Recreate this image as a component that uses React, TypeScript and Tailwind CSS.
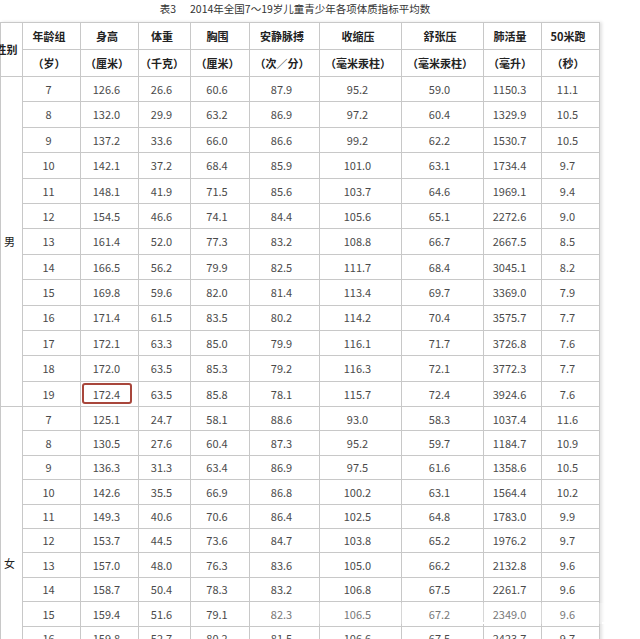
import React from "react";

const male: string[][] = [
  ["7", "126.6", "26.6", "60.6", "87.9", "95.2", "59.0", "1150.3", "11.1"],
  ["8", "132.0", "29.9", "63.2", "86.9", "97.2", "60.4", "1329.9", "10.5"],
  ["9", "137.2", "33.6", "66.0", "86.6", "99.2", "62.2", "1530.7", "10.5"],
  ["10", "142.1", "37.2", "68.4", "85.9", "101.0", "63.1", "1734.4", "9.7"],
  ["11", "148.1", "41.9", "71.5", "85.6", "103.7", "64.6", "1969.1", "9.4"],
  ["12", "154.5", "46.6", "74.1", "84.4", "105.6", "65.1", "2272.6", "9.0"],
  ["13", "161.4", "52.0", "77.3", "83.2", "108.8", "66.7", "2667.5", "8.5"],
  ["14", "166.5", "56.2", "79.9", "82.5", "111.7", "68.4", "3045.1", "8.2"],
  ["15", "169.8", "59.6", "82.0", "81.4", "113.4", "69.7", "3369.0", "7.9"],
  ["16", "171.4", "61.5", "83.5", "80.2", "114.2", "70.4", "3575.7", "7.7"],
  ["17", "172.1", "63.3", "85.0", "79.9", "116.1", "71.7", "3726.8", "7.6"],
  ["18", "172.0", "63.5", "85.3", "79.2", "116.3", "72.1", "3772.3", "7.7"],
  ["19", "172.4", "63.5", "85.8", "78.1", "115.7", "72.4", "3924.6", "7.6"],
];

const female: string[][] = [
  ["7", "125.1", "24.7", "58.1", "88.6", "93.0", "58.3", "1037.4", "11.6"],
  ["8", "130.5", "27.6", "60.4", "87.3", "95.2", "59.7", "1184.7", "10.9"],
  ["9", "136.3", "31.3", "63.4", "86.9", "97.5", "61.6", "1358.6", "10.5"],
  ["10", "142.6", "35.5", "66.9", "86.8", "100.2", "63.1", "1564.4", "10.2"],
  ["11", "149.3", "40.6", "70.6", "86.4", "102.5", "64.8", "1783.0", "9.9"],
  ["12", "153.7", "44.5", "73.6", "84.7", "103.8", "65.2", "1976.2", "9.7"],
  ["13", "157.0", "48.0", "76.3", "83.6", "105.0", "66.2", "2132.8", "9.6"],
  ["14", "158.7", "50.4", "78.3", "83.2", "106.8", "67.5", "2261.7", "9.6"],
  ["15", "159.4", "51.6", "79.1", "82.3", "106.5", "67.2", "2349.0", "9.6"],
  ["16", "159.8", "52.7", "80.2", "81.5", "106.6", "67.5", "2423.7", "9.7"],
  ["17", "160.1", "53.3", "80.9", "81.2", "107.0", "67.8", "2440.2", "9.8"],
  ["18", "160.1", "52.6", "80.8", "80.5", "106.2", "67.8", "2458.5", "9.8"],
  ["19", "159.9", "52.7", "81.1", "79.9", "106.1", "68.1", "2499.2", "9.8"],
];

const heads = ["年龄组", "身高", "体重", "胸围", "安静脉搏", "收缩压", "舒张压", "肺活量", "50米跑"];
const units = ["（岁）", "（厘米）", "（千克）", "（厘米）", "（次／分）", "（毫米汞柱）", "（毫米汞柱）", "（毫升）", "（秒）"];

const headCell = "flex items-center justify-center bg-white pr-[5px] text-[11px] font-bold text-[#222] whitespace-nowrap";
const dataCell = "relative flex items-center justify-center bg-white pr-[6px] text-[11px] text-[#4a4a4a] whitespace-nowrap";

export default function App() {
  return (
    <div className="relative h-[639px] w-[640px] overflow-hidden bg-white font-['Noto_Sans_CJK_SC','Noto_Sans',sans-serif]">
      <div className="flex h-[22px] w-[600px] items-center justify-center gap-[14px] pb-[4px] pr-[10px] text-[10.5px] text-[#333]">
        <span>表3</span>
        <span>2014年全国7～19岁儿童青少年各项体质指标平均数</span>
      </div>
      <div className="grid w-fit grid-cols-[21px_57px_57px_51px_58px_69px_81px_81px_57px_57px] grid-rows-[26px_26px_repeat(13,24.4px)_repeat(13,23.4px)] gap-px bg-[#c8c8c8] p-px shadow-[2px_0_3px_rgba(0,0,0,0.12)]">
        <div className="row-span-2 flex items-center justify-center bg-white pr-[10px] text-[11px] font-bold text-[#222] whitespace-nowrap">
          性别
        </div>
        {heads.map((h) => (
          <div key={h} className={headCell}>
            {h}
          </div>
        ))}
        {units.map((u, i) => (
          <div key={i} className={headCell}>
            {u}
          </div>
        ))}
        {male.map((row, r) => (
          <React.Fragment key={"m" + r}>
            {r === 0 && (
              <div className="row-span-13 flex items-center justify-center bg-white pr-[4px] text-[11px] text-[#222]">
                男
              </div>
            )}
            {row.map((v, c) => (
              <div key={c} className={dataCell}>
                {v}
                {r === 12 && c === 1 && (
                  <div className="absolute left-[1px] top-[1px] h-[21px] w-[50px] rounded-[3px] border-2 border-[#a8463b]" />
                )}
              </div>
            ))}
          </React.Fragment>
        ))}
        {female.map((row, r) => (
          <React.Fragment key={"f" + r}>
            {r === 0 && (
              <div className="row-span-13 flex items-center justify-center bg-white pb-[4px] pr-[4px] text-[11px] text-[#222]">
                女
              </div>
            )}
            {row.map((v, c) => (
              <div key={c} className={dataCell}>
                {v}
              </div>
            ))}
          </React.Fragment>
        ))}
      </div>
      <div className="absolute left-[272px] top-[603px] h-[21px] w-[346px] border-b-2 border-dashed border-white bg-white/25" />
    </div>
  );
}
